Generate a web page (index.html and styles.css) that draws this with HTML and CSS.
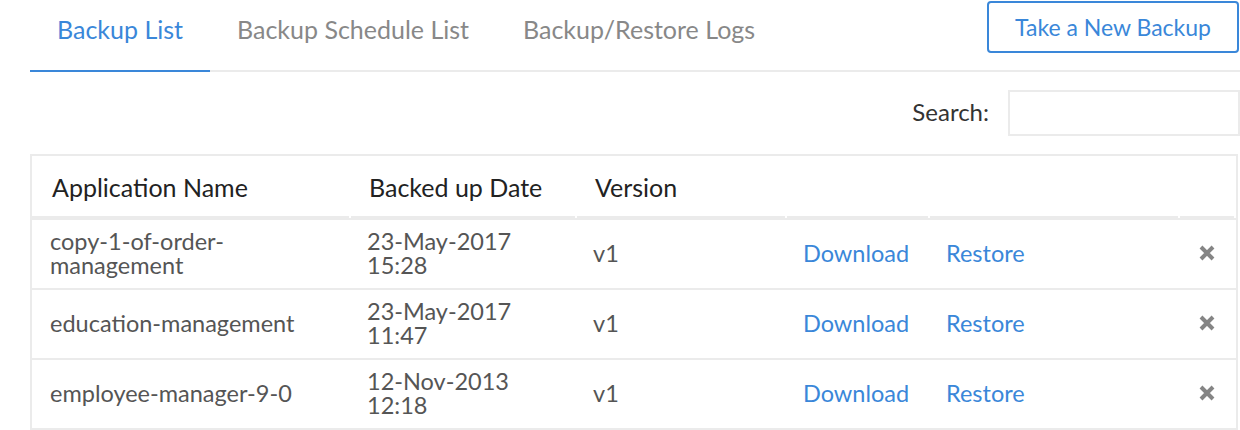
FILE: index.html
```html
<!DOCTYPE html>
<html lang="en">
<head>
  <meta charset="UTF-8" />
  <title>Backups</title>
  <link rel="stylesheet" href="styles.css">
</head>
<body>
  <div class="page">
    <div class="tab-bar">
      <a class="tab active" href="#">Backup List</a>
      <a class="tab" href="#">Backup Schedule List</a>
      <a class="tab" href="#">Backup/Restore Logs</a>
      <button class="new-backup">Take a New Backup</button>
    </div>

    <div class="search-row">
      <label for="search">Search:</label>
      <input type="text" id="search" />
    </div>

    <table class="backup-table">
      <thead>
        <tr>
          <th class="col-name">Application Name</th>
          <th class="col-date">Backed up Date</th>
          <th class="col-version">Version</th>
          <th class="col-download"></th>
          <th class="col-restore"></th>
          <th class="col-delete"></th>
        </tr>
      </thead>
      <tbody>
        <tr>
          <td>copy-1-of-order-<br>management</td>
          <td>23-May-2017<br>15:28</td>
          <td>v1</td>
          <td><a href="#">Download</a></td>
          <td><a href="#">Restore</a></td>
          <td class="delete"><svg width="18" height="18" viewBox="0 0 18 18"><path d="M3 3L15 15M15 3L3 15" /></svg></td>
        </tr>
        <tr>
          <td>education-management</td>
          <td>23-May-2017<br>11:47</td>
          <td>v1</td>
          <td><a href="#">Download</a></td>
          <td><a href="#">Restore</a></td>
          <td class="delete"><svg width="18" height="18" viewBox="0 0 18 18"><path d="M3 3L15 15M15 3L3 15" /></svg></td>
        </tr>
        <tr>
          <td>employee-manager-9-0</td>
          <td>12-Nov-2013<br>12:18</td>
          <td>v1</td>
          <td><a href="#">Download</a></td>
          <td><a href="#">Restore</a></td>
          <td class="delete"><svg width="18" height="18" viewBox="0 0 18 18"><path d="M3 3L15 15M15 3L3 15" /></svg></td>
        </tr>
      </tbody>
    </table>
  </div>
</body>
</html>
```

FILE: styles.css
```css
* {
  box-sizing: border-box;
}

body {
  margin: 0;
  font-family: 'Lato', sans-serif;
  background: #fff;
  color: #555;
}

.page {
  padding-left: 30px;
}

.tab-bar {
  display: flex;
  align-items: flex-start;
  height: 72px;
  border-bottom: 2px solid #ebebeb;
}

.tab {
  height: 72px;
  padding: 14px 27px 0;
  font-size: 25px;
  color: #888;
  text-decoration: none;
}

.tab.active {
  color: #3a87d9;
  border-bottom: 2px solid #3a87d9;
}

.new-backup {
  margin: 1px 1px 0 auto;
  width: 252px;
  height: 52px;
  background: #fff;
  border: 2px solid #3a87d9;
  border-radius: 4px;
  font-family: 'Lato', sans-serif;
  font-size: 23px;
  color: #3a87d9;
  cursor: pointer;
}

.search-row {
  display: flex;
  justify-content: flex-end;
  align-items: center;
  gap: 19px;
  margin-top: 18px;
}

.search-row label {
  padding-bottom: 4px;
  font-size: 24px;
  color: #333;
}

.search-row input {
  width: 232px;
  height: 46px;
  border: 2px solid #ebebeb;
  font-size: 20px;
}

.backup-table {
  width: 1208px;
  margin-top: 18px;
  border-collapse: collapse;
  border: 2px solid #ebebeb;
  font-size: 23.5px;
}

.backup-table th {
  height: 64px;
  padding: 0 0 0 18px;
  text-align: left;
  font-size: 25px;
  font-weight: 400;
  color: #222;
  background: linear-gradient(#ebebeb, #ebebeb) no-repeat left bottom / calc(100% - 2px) 2px;
}

.backup-table th:first-child {
  padding-left: 20px;
}

.backup-table td {
  height: 70px;
  padding: 0 0 3px 16px;
  line-height: 24px;
  border-top: 2px solid #ebebeb;
}

.backup-table td:first-child {
  padding-left: 18px;
}

.col-name { width: 320px; }
.col-date { width: 226px; }
.col-version { width: 210px; }
.col-download { width: 143px; }
.col-restore { width: 250px; }

.backup-table a {
  color: #3a87d9;
  text-decoration: none;
}

.delete svg {
  display: block;
  margin-left: 2px;
}

.delete path {
  fill: none;
  stroke: #858585;
  stroke-width: 4;
}
```
